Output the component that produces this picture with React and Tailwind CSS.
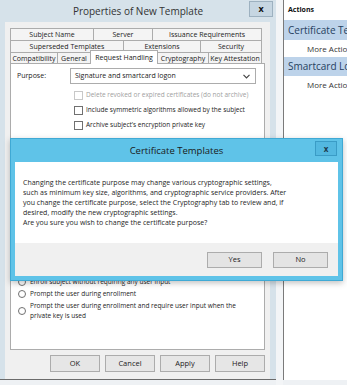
function Tab({ label, className = "" }) {
  return (
    <div
      className={`flex items-center justify-center border-t border-l border-[#acacac] bg-[#f4f4f4] text-[7px] leading-none text-[#222] whitespace-nowrap ${className}`}
    >
      {label}
    </div>
  );
}

function Check({ label, disabled }) {
  return (
    <div className="flex h-[12px] items-center gap-[3px]">
      <div
        className={`h-[9px] w-[9px] border bg-white ${disabled ? "border-[#c8c8c8]" : "border-[#707070]"}`}
      />
      <span className={`text-[6.5px] whitespace-nowrap ${disabled ? "text-[#a0a0a0]" : "text-[#222]"}`}>
        {label}
      </span>
    </div>
  );
}

function Radio({ children }) {
  return (
    <div className="flex items-center gap-[4px]">
      <div className="h-[8px] w-[8px] shrink-0 rounded-full border border-[#707070] bg-white" />
      <div className="text-[6.5px] leading-[10px] text-[#222]">{children}</div>
    </div>
  );
}

function WinButton({ label }) {
  return (
    <div className="flex h-[17px] w-[50px] items-center justify-center border border-[#acacac] bg-[#e6e6e6] text-[7.5px] text-[#222]">
      {label}
    </div>
  );
}

export default function App() {
  return (
    <div className="relative flex h-[385px] w-[347px] overflow-hidden bg-[#eef1f4] font-['Open_Sans',sans-serif]">
      {/* Properties window */}
      <div className="flex h-[380px] w-[276px] shrink-0 flex-col border-b border-[#6b6b6b] bg-[#d6e2ea]">
        <div className="relative h-[22px] shrink-0">
          <div className="pt-[4px] text-center text-[10px] leading-[14px] text-[#333]">
            Properties of New Template
          </div>
          <div className="absolute right-[3px] top-[1px] flex h-[16px] w-[24px] items-center justify-center border border-[#9db1c0] bg-[#c6d6e2] text-[9px] font-bold text-[#111]">
            x
          </div>
        </div>

        <div className="ml-[5px] flex w-[265px] flex-1 flex-col bg-[#f0f0f0] px-[5px] pt-[6px]">
          {/* tabs */}
          <div className="flex h-[12px] w-[252px]">
            <Tab label="Subject Name" className="w-[83px]" />
            <Tab label="Server" className="w-[59px]" />
            <Tab label="Issuance Requirements" className="w-[110px] border-r" />
          </div>
          <div className="flex h-[12px] w-[252px]">
            <Tab label="Superseded Templates" className="w-[113px]" />
            <Tab label="Extensions" className="w-[77px]" />
            <Tab label="Security" className="w-[62px] border-r" />
          </div>
          <div className="relative z-10 flex h-[11px] w-[252px] items-end">
            <Tab label="Compatibility" className="h-[11px] w-[47px]" />
            <Tab label="General" className="h-[11px] w-[33px]" />
            <div className="-mb-px flex h-[14px] w-[68px] items-center justify-center border-x border-t border-[#acacac] bg-white text-[7px] leading-none text-[#222]">
              Request Handling
            </div>
            <Tab label="Cryptography" className="h-[11px] w-[50px] border-l-0" />
            <Tab label="Key Attestation" className="h-[11px] w-[54px] border-r" />
          </div>

          {/* tab page */}
          <div className="flex h-[287px] flex-col border border-[#acacac] bg-white">
            <div className="mt-[4px] flex h-[16px] items-center">
              <span className="w-[59px] pl-[6px] text-[7px] text-[#222]">Purpose:</span>
              <div className="flex h-[16px] w-[186px] items-center justify-between border border-[#acacac] bg-white pl-[4px] pr-[5px]">
                <span className="text-[7px] text-[#222]">Signature and smartcard logon</span>
                <svg width="7" height="5" viewBox="0 0 7 5">
                  <path d="M0.5 0.8 L3.5 3.8 L6.5 0.8" fill="none" stroke="#444" strokeWidth="1.2" />
                </svg>
              </div>
            </div>

            <div className="ml-[63px] mt-[5px] flex flex-col gap-[3px]">
              <Check disabled label="Delete revoked or expired certificates (do not archive)" />
              <Check label="Include symmetric algorithms allowed by the subject" />
              <Check label="Archive subject’s encryption private key" />
            </div>

            <div className="ml-[7px] mt-[146px] flex flex-col gap-[2px]">
              <Radio>Enroll subject without requiring any user input</Radio>
              <Radio>Prompt the user during enrollment</Radio>
              <Radio>
                Prompt the user during enrollment and require user input when the
                <br />
                private key is used
              </Radio>
            </div>
          </div>

          <div className="mt-[5px] flex justify-end gap-[5px]">
            <WinButton label="OK" />
            <WinButton label="Cancel" />
            <WinButton label="Apply" />
            <WinButton label="Help" />
          </div>
        </div>
      </div>

      <div className="w-[7px] shrink-0 bg-[#f3f5f7]" />

      {/* Actions pane */}
      <div className="flex h-[380px] min-w-0 flex-1 flex-col overflow-hidden border-l border-[#7a7a7a] bg-white">
        <div className="flex h-[20px] items-center pl-[4px] text-[7px] font-bold text-[#111]">Actions</div>
        <div className="flex h-[20px] items-center overflow-hidden whitespace-nowrap bg-[#bdd3ea] pl-[4px] text-[10px] text-[#27415f]">
          Certificate Templates
        </div>
        <div className="flex h-[17px] items-center overflow-hidden whitespace-nowrap pl-[23px] text-[8px] text-[#333]">More Actions</div>
        <div className="flex h-[19px] items-center overflow-hidden whitespace-nowrap bg-[#bdd3ea] pl-[4px] text-[10px] text-[#27415f]">
          Smartcard Logon
        </div>
        <div className="flex h-[17px] items-center overflow-hidden whitespace-nowrap pl-[23px] text-[8px] text-[#333]">More Actions</div>
      </div>

      {/* Confirmation dialog */}
      <div className="absolute left-[10px] top-[138px] flex h-[143px] w-[333px] flex-col border border-[#3fa9d4] bg-[#5fc3e8] shadow-[0_2px_6px_rgba(0,0,0,0.25)]">
        <div className="relative h-[23px] shrink-0">
          <div className="pt-[5px] text-center text-[9.5px] leading-[13px] text-[#1a1a1a]">Certificate Templates</div>
          <div className="absolute right-[5px] top-[2px] flex h-[15px] w-[22px] items-center justify-center border border-[#3a9cc6] bg-[#53b8e0] text-[8px] font-bold text-[#1d3b4d]">
            x
          </div>
        </div>
        <div className="mx-[4px] flex h-[81px] flex-col bg-white pl-[8px] pt-[16px] text-[7px] leading-[10px] text-[#1e1e1e]">
          <div className="whitespace-nowrap">Changing the certificate purpose may change various cryptographic settings,</div>
          <div className="whitespace-nowrap">such as minimum key size, algorithms, and cryptographic service providers.  After</div>
          <div className="whitespace-nowrap">you change the certificate purpose, select the Cryptography tab to review and, if</div>
          <div className="whitespace-nowrap">desired, modify the new cryptographic settings.</div>
          <div className="whitespace-nowrap">Are you sure you wish to change the certificate purpose?</div>
        </div>
        <div className="mx-[4px] flex h-[33px] items-center justify-end gap-[11px] bg-[#f0f0f0] pr-[10px]">
          <div className="flex h-[16px] w-[55px] items-center justify-center border border-[#acacac] bg-[#e4e4e4] text-[7.5px] text-[#222]">
            Yes
          </div>
          <div className="flex h-[16px] w-[55px] items-center justify-center border border-[#acacac] bg-[#e4e4e4] text-[7.5px] text-[#222]">
            No
          </div>
        </div>
      </div>
    </div>
  );
}
